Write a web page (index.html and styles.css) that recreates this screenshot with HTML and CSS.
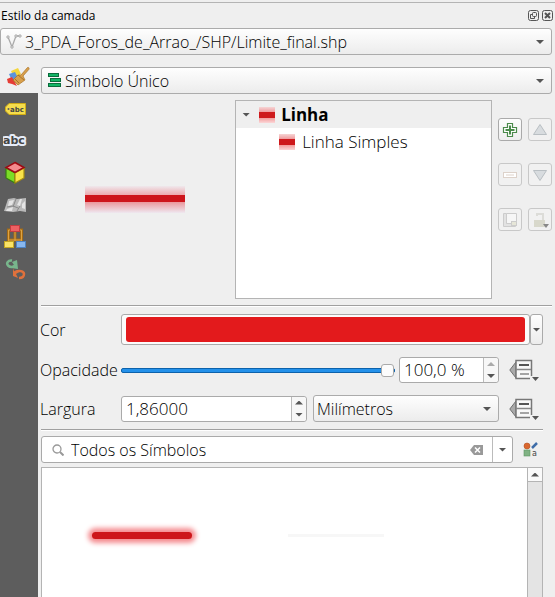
FILE: index.html
```html
<!DOCTYPE html>
<html lang="pt">
<head>
<meta charset="utf-8">
<title>Estilo da camada</title>
<link rel="stylesheet" href="styles.css">
</head>
<body>
<header class="titlebar">
  <h1>Estilo da camada</h1>
  <button class="dock" aria-label="Destacar"><svg width="11" height="11" viewBox="0 0 11 11" fill="none" stroke="#555"><rect x=".5" y=".5" width="10" height="10" rx="2"/><rect x="4.500" y="2.500" width="4" height="4" rx="1"/><path d="M4 4.500H2.500v4h4V7"/></svg></button>
  <button class="dock" aria-label="Fechar"><svg width="11" height="11" viewBox="0 0 11 11" fill="none" stroke="#555"><rect x=".5" y=".5" width="10" height="10" rx="2"/><path stroke-width="2" d="M3 3l5 5M8 3L3 8"/></svg></button>
</header>
<div class="combo layer">
  <svg width="16" height="16" viewBox="0 0 16 16" fill="none" stroke="#aaa"><path stroke-width="1.300" d="M2 3l4 10L10 2h4"/><g fill="#eee" stroke="#999" stroke-width=".8"><circle cx="2" cy="3" r="1.200"/><circle cx="6" cy="13" r="1.200"/><circle cx="10" cy="2" r="1.200"/><circle cx="14" cy="2" r="1.200"/></g></svg>
  <select aria-label="Camada"><option>3_PDA_Foros_de_Arrao_/SHP/Limite_final.shp</option></select>
</div>
<div class="workspace">
  <nav class="tabs" aria-label="Secções">
    <button class="tab active" aria-label="Simbologia"><svg width="24" height="24" viewBox="0 0 24 24"><path fill="#f4d63c" d="M5 6l7-3 3 6-7 4z"/><path fill="#5b93dc" d="M3 9l6-2 3 6-6 3z"/><path fill="#e53d35" d="M1 14l5-2 5 9-5-2-4-1z"/><path fill="#d9a04c" stroke="#a97225" stroke-width=".7" d="M21.500 2.500c1.500-.5 2 .8 1.300 2L17 11l2 4-7 5-5-5 5-5 3 0z"/><path stroke="#9b6a24" stroke-width=".8" d="M12 10l6 5M9 14l4 4" fill="none"/></svg></button>
    <button class="tab" aria-label="Rótulos"><svg width="24" height="24" viewBox="0 0 24 24"><path fill="#f5dc4c" stroke="#d0ac16" d="M6 6.500h16.500v11H6L2.500 14v-4z"/><circle cx="5.500" cy="12" r="1" fill="#5d5d5d"/><text x="7" y="15" class="glyph small">abc</text></svg></button>
    <button class="tab" aria-label="Máscaras"><svg width="24" height="24" viewBox="0 0 24 24"><text x="0" y="15" class="glyph halo">abc</text></svg></button>
    <button class="tab" aria-label="Vista 3D"><svg width="24" height="24" viewBox="0 0 24 24" stroke-width="1.200"><path fill="#7bdc26" stroke="#357d10" d="M3 7l9 5v10l-9-5z"/><path fill="#f8e34a" stroke="#a78d0c" d="M21 7l-9 5v10l9-5z"/><path fill="#f38a8d" stroke="#9d0a12" stroke-width="1.500" d="M12 1.500L21 6.500l-9 5-9-5z"/></svg></button>
    <button class="tab" aria-label="Diagramas"><svg width="24" height="24" viewBox="0 0 24 24"><path fill="#b9b9b9" d="M5 6l6-1 3 1 9-1v14l-6-1-7 1-9-1z"/><path fill="#e5e5e5" d="M6 8l5-1-2 5-4 1zM14 12l3-6 2 0-2 7zM4 16l6-2-1 4-6 0zM19 11l3-3v8l-3-1z"/><path fill="none" stroke="#8a8a8a" d="M13 6l-3 8M17 13l-3 5M4 14l6-1 5 2"/></svg></button>
    <button class="tab" aria-label="Campos"><svg width="24" height="24" viewBox="0 0 24 24"><path fill="none" stroke="#a46b15" stroke-width="3" d="M12 6v10M9 5H5.500v12M15 5h3.500v12M6 15h12"/><path fill="none" stroke="#dda344" d="M12 6v10M9 5H5.500v12M15 5h3.500v12M6 15h12"/><rect x="7.500" y=".5" width="9" height="6" fill="#ed6063" stroke="#c33c40"/><rect x="1.500" y="16.500" width="9" height="6" fill="#fae367" stroke="#c4a623"/><rect x="13.500" y="16.500" width="9" height="6" fill="#88b7ee" stroke="#4e83c4"/></svg></button>
    <button class="tab" aria-label="Histórico"><svg width="24" height="24" viewBox="0 0 24 24" fill="none" stroke-width="2.500"><path stroke="#78b68c" d="M9 3.500C5 3 3 6 5 8.500c2 2 5 2 8-.5"/><path fill="#78b68c" stroke="none" d="M9 5l5-2 1 9-7-1 3-3z"/><path stroke="#df713c" d="M12 15c4-2 9-1 9 2 0 3-2 4-5 4"/><path fill="#df713c" stroke="none" d="M10 11l1 3 5 1-3 2 2 4-5-2z"/></svg></button>
  </nav>
  <main class="content">
    <div class="combo renderer">
      <svg width="13" height="15" viewBox="0 0 13 15" fill="#12b565" stroke="#0c6b3d"><rect x=".5" y=".5" width="10" height="3"/><rect x="2.500" y="5.500" width="10" height="3"/><rect x=".5" y="10.500" width="12" height="3"/></svg>
      <select aria-label="Tipo de símbolo"><option>Símbolo Único</option></select>
    </div>
    <section class="symbol">
      <div class="preview"><div class="sample"></div></div>
      <ul class="tree">
        <li class="node root"><i class="arrow"></i><i class="swatch"></i>Linha</li>
        <li class="node child"><i class="swatch"></i>Linha Simples</li>
      </ul>
      <div class="tools">
        <button class="tool" aria-label="Adicionar"><svg width="16" height="16" viewBox="0 0 16 16"><path fill="#fff" stroke="#4b8b4b" stroke-width="1.200" d="M5.500 1.500h5v4h4v5h-4v4h-5v-4h-4v-5h4z"/><path stroke="#4b8b4b" stroke-width="2" d="M8 3.500v9M3.500 8h9"/></svg></button>
        <button class="tool off" disabled aria-label="Subir"><svg width="16" height="16" viewBox="0 0 16 16"><path fill="#d8dcdf" stroke="#b9bfc3" d="M8 2.500l6.500 10h-13z"/></svg></button>
        <button class="tool off" disabled aria-label="Remover"><svg width="16" height="16" viewBox="0 0 16 16"><rect x="1.500" y="5.500" width="13" height="5" fill="#fff" stroke="#ddd2ca"/><path stroke="#ddd2ca" d="M4 8h8"/></svg></button>
        <button class="tool off" disabled aria-label="Descer"><svg width="16" height="16" viewBox="0 0 16 16"><path fill="#d8dcdf" stroke="#b9bfc3" d="M8 13.500l6.500-10h-13z"/></svg></button>
        <button class="tool off" disabled aria-label="Duplicar"><svg width="16" height="16" viewBox="0 0 16 16"><path fill="#e2e2e2" stroke="#ccc" d="M1.500 1.500h3v10h9v3h-12z"/><path fill="#f6f6f6" stroke="#ccc" d="M4.500 1.500h10v10h-10z"/><rect x="9.500" y="9.500" width="5" height="4" fill="#e6e6d8" stroke="#ccc"/></svg></button>
        <button class="tool off" disabled aria-label="Bloquear"><svg width="18" height="18" viewBox="0 0 18 18"><path fill="none" stroke="#dcdcd8" stroke-width="2" d="M6 5V3h6v6"/><rect x="3" y="9" width="11" height="7" fill="#d8d8cb"/><path fill="#888" d="M12 13h6l-3 4z"/></svg></button>
      </div>
    </section>
    <form class="props">
      <label for="color">Cor</label>
      <div class="colorbox"><button type="button" id="color" class="color"><span></span></button><button type="button" class="drop" aria-label="Mais cores"><i class="arrow"></i></button></div>
      <label for="opacity">Opacidade</label>
      <div class="line">
        <input type="range" id="opacity" min="0" max="100" value="100">
        <div class="spin percent"><input type="text" value="100,0 %" aria-label="Opacidade em percentagem"><div class="steps"><button type="button" disabled aria-label="Aumentar"><i class="arrow up"></i></button><button type="button" aria-label="Diminuir"><i class="arrow"></i></button></div></div>
        <button type="button" class="override" aria-label="Definido por dados"><svg width="30" height="22" viewBox="0 0 30 22"><path fill="#aaa" stroke="#707070" d="M7 3v16L.8 11z"/><path fill="#f8f8f8" stroke="#777" stroke-width="1.500" d="M7 1.500h15.500v18H7z"/><path stroke="#555" stroke-width="2" d="M10 6h10"/><path stroke="#888" stroke-width="1.500" d="M7 10.500h15M11 15h9"/><path fill="#f0f0f0" d="M21 17h9v5h-9z"/><path fill="#555" d="M23 18h7l-3.500 4z"/></svg></button>
      </div>
      <label for="width">Largura</label>
      <div class="line">
        <div class="spin"><input type="text" id="width" value="1,86000"><div class="steps"><button type="button" aria-label="Aumentar"><i class="arrow up"></i></button><button type="button" aria-label="Diminuir"><i class="arrow"></i></button></div></div>
        <div class="combo unit"><select aria-label="Unidade"><option>Milímetros</option></select></div>
        <button type="button" class="override" aria-label="Definido por dados"><svg width="30" height="22" viewBox="0 0 30 22"><path fill="#aaa" stroke="#707070" d="M7 3v16L.8 11z"/><path fill="#f8f8f8" stroke="#777" stroke-width="1.500" d="M7 1.500h15.500v18H7z"/><path stroke="#555" stroke-width="2" d="M10 6h10"/><path stroke="#888" stroke-width="1.500" d="M7 10.500h15M11 15h9"/><path fill="#f0f0f0" d="M21 17h9v5h-9z"/><path fill="#555" d="M23 18h7l-3.500 4z"/></svg></button>
      </div>
    </form>
    <section class="library">
      <div class="finder">
        <div class="search">
          <svg width="12" height="12" viewBox="0 0 12 12" fill="none" stroke="#999" stroke-width="1.300"><circle cx="5" cy="5" r="4"/><path stroke-width="2" d="M8 8l3.500 3.500"/></svg>
          <input type="text" value="Todos os Símbolos" aria-label="Procurar símbolos">
          <button class="clear" aria-label="Limpar"><svg width="13" height="10" viewBox="0 0 13 10"><path fill="#999" d="M4 0h9v10H4L0 5z"/><path stroke="#fff" stroke-width="1.500" d="M5 2.500l5 5M10 2.500l-5 5"/></svg></button>
          <button class="more" aria-label="Grupos"><i class="arrow"></i></button>
        </div>
        <button class="manager" aria-label="Gestor de estilos"><svg width="15" height="15" viewBox="0 0 15 15"><circle cx="4" cy="4" r="3" fill="#d9672f" stroke="#b44d1c" stroke-width=".6"/><path stroke="#3f6da8" stroke-width="2.500" d="M9 6l5-5"/><rect x="1" y="8" width="6" height="6" fill="#80b284" stroke="#5d9463" stroke-width=".6"/><text x="9" y="14" class="glyph letter">a</text></svg></button>
      </div>
      <div class="list">
        <div class="items"><button class="item" aria-label="Linha vermelha"><span class="stroke glow"></span></button><button class="item" aria-label="Linha branca"><span class="stroke pale"></span></button></div>
        <div class="scroll"><button aria-label="Rolar para cima"><i class="arrow up"></i></button></div>
      </div>
    </section>
  </main>
</div>
</body>
</html>
```
FILE: styles.css
```css
* { box-sizing: border-box; }

body {
  margin: 0;
  height: 100vh;
  display: flex;
  flex-direction: column;
  overflow: hidden;
  background: #efefef;
  color: #000;
  font: 300 16px/24px "Open Sans", "Noto Sans", sans-serif;
}

button, input, select { font: inherit; color: inherit; }
button { padding: 0; border: 0; background: none; display: flex; align-items: center; justify-content: center; }
input[type="text"] { flex: 1; width: 100%; min-width: 0; padding: 0; border: 0; background: none; outline: 0; }
svg { flex: none; display: block; }
h1, ul { margin: 0; padding: 0; list-style: none; }

.arrow {
  flex: none;
  width: 8px;
  height: 4px;
  background: #555;
  clip-path: polygon(0 0, 100% 0, 50% 100%);
}
.arrow.up { clip-path: polygon(0 100%, 100% 100%, 50% 0); }
button:disabled .arrow { background: #aaa; }

.glyph { font-family: "DejaVu Sans", sans-serif; font-weight: 700; fill: #444; }
.small { font-size: 7px; }
.halo { font-size: 11px; paint-order: stroke; stroke: #e6ecf8; stroke-width: 4px; stroke-linejoin: round; }
.letter { font-size: 8px; font-weight: 400; }

.titlebar {
  flex: none;
  height: 26px;
  margin-top: 2px;
  padding: 0 2px 0 1px;
  display: flex;
  align-items: center;
  gap: 3px;
  border-top: 1px solid #b4b4b4;
}
.titlebar h1 { flex: 1; font-size: 12px; font-weight: 400; }

.combo {
  height: 27px;
  display: flex;
  align-items: center;
  position: relative;
  padding-left: 6px;
  border: 1px solid #ababab;
  border-radius: 3px;
  background: linear-gradient(#fefefe, #ececec);
}
.combo select {
  flex: 1;
  min-width: 0;
  height: 25px;
  padding: 0 20px 0 3px;
  border: 0;
  appearance: none;
  background: none;
}
.combo::after {
  content: "";
  position: absolute;
  right: 7px;
  top: 11px;
  width: 8px;
  height: 4px;
  background: #555;
  clip-path: polygon(0 0, 100% 0, 50% 100%);
}
.layer { flex: none; margin-right: 3px; padding-left: 5px; }

.workspace { flex: 1; min-height: 0; display: flex; gap: 3px; }
.tabs { flex: none; width: 38px; margin-top: 6px; background: #5d5d5d; }
.tab { width: 38px; height: 32px; padding-right: 8px; }
.tab.active { background: #efefef; padding-right: 2px; }

.content { flex: 1; min-width: 0; display: flex; flex-direction: column; padding: 12px 3px 0 0; }
.renderer { flex: none; }
.renderer select { padding-left: 4px; }

.symbol {
  flex: none;
  display: flex;
  gap: 6px;
  padding: 6px 0;
  border-bottom: 1px solid #a0a0a0;
  box-shadow: 0 1px #fff;
}
.preview { flex: 189; display: grid; place-items: center; }
.sample {
  width: 100px;
  height: 27px;
  background: linear-gradient(#efe8ec, #eda9ae 9px, #cd151b 9px 16px, #ea979c 16px, #efe8f0);
}
.tree { flex: 256; height: 199px; border: 1px solid #b4b4b4; background: #fff; font-size: 17px; }
.node { display: flex; align-items: center; height: 27px; }
.root { gap: 6px; padding-left: 6px; background: #efefef; font-weight: 700; }
.root .swatch { margin-left: 3px; }
.child { gap: 7px; padding-left: 43px; }
.swatch {
  width: 16px;
  height: 16px;
  background: linear-gradient(#f6d5d5, #ef9a9d 5px, #ce191c 5px 11px, #f39b9b 11px, #fbd7d8);
}
.tools {
  flex: none;
  display: grid;
  grid-template-columns: 24px 24px;
  gap: 22px 6px;
  align-content: start;
  padding-top: 18px;
}
.tool {
  height: 23px;
  border: 1px solid #aaa;
  border-radius: 3px;
  background: linear-gradient(#fdfdfd, #eee);
}
.tool.off { border-color: #c8c8c8; background: #f1f1f1; }

.props {
  flex: none;
  display: grid;
  grid-template-columns: 76px minmax(0, 1fr);
  grid-template-rows: 31px 26px 27px;
  gap: 12px 5px;
  align-items: center;
  margin-left: -1px;
  padding: 8px 9px 0 0;
}
.colorbox { display: flex; height: 31px; }
.color { flex: 1; padding: 2px 4px; border: 1px solid #aaa; border-radius: 3px; background: #fbfbfb; }
.color span { flex: 1; height: 25px; border-radius: 3px; background: #e31a1c; }
.drop { width: 13px; border: 1px solid #aaa; border-radius: 3px; background: linear-gradient(#fefefe, #ececec); }
.line { display: flex; align-items: center; gap: 6px; }

input[type="range"] { flex: 1; min-width: 0; height: 14px; margin: 0; appearance: none; background: none; }
input[type="range"]::-webkit-slider-runnable-track {
  height: 5px;
  border: 1px solid #0d62ab;
  border-radius: 2px;
  background: #2491ea;
}
input[type="range"]::-webkit-slider-thumb {
  appearance: none;
  width: 13px;
  height: 13px;
  margin-top: -5px;
  border: 1px solid #aaa;
  border-radius: 3px;
  background: #fcfcfc;
}

.spin {
  flex: 1;
  min-width: 0;
  height: 26px;
  display: flex;
  padding-left: 4px;
  border: 1px solid #aaa;
  border-radius: 3px;
  background: #fff;
  font-size: 17px;
}
.percent { flex: none; width: 100px; margin-left: -2px; }
.steps { flex: none; width: 15px; display: grid; border-left: 1px solid #bbb; background: #f7f7f7; border-radius: 0 3px 3px 0; }
.unit { flex: none; width: 186px; padding-left: 0; }
.override { flex: none; width: 38px; padding-left: 4px; justify-content: flex-start; }

.library {
  flex: 1;
  min-height: 0;
  display: flex;
  flex-direction: column;
  margin: 7px 9px 0 0;
  border-top: 1px solid #a0a0a0;
  box-shadow: inset 0 1px #fff;
}
.finder { flex: none; display: flex; align-items: center; padding: 6px 0 4px; }
.search {
  flex: 1;
  height: 27px;
  display: flex;
  align-items: center;
  padding-left: 10px;
  border: 1px solid #aaa;
  border-radius: 3px;
  background: #fff;
}
.search input { margin-left: 7px; }
.clear { width: 28px; padding-right: 4px; }
.more { width: 20px; height: 25px; border-left: 1px solid #bbb; }
.manager { width: 30px; padding-left: 5px; }

.list { flex: 1; min-height: 0; display: flex; border: 1px solid #b4b4b4; border-bottom: 0; background: #fff; }
.items { flex: 1; display: flex; align-items: flex-start; padding: 56px 0 0 3px; }
.item { width: 194px; height: 22px; }
.stroke { width: 100px; height: 7px; border-radius: 4px; }
.glow { background: #cd161a; box-shadow: 0 0 5px 4px #f58c90; }
.pale { width: 96px; height: 3px; border-radius: 0; background: #f7f7f7; }
.scroll { flex: none; width: 15px; border-left: 1px solid #b4b4b4; background: #e4e4e4; }
.scroll button { width: 14px; height: 14px; border-bottom: 1px solid #b4b4b4; background: #fafafa; }
```
